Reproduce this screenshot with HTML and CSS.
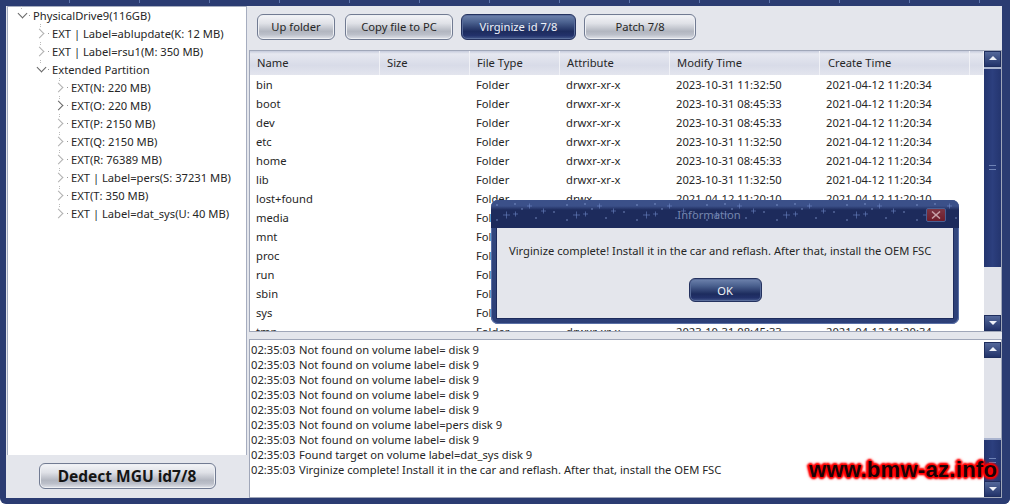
FILE: index.html
```html
<!DOCTYPE html>
<html lang="en">
<head>
<meta charset="utf-8">
<title>MGU tool</title>
<link rel="stylesheet" href="styles.css">
</head>
<body>
<div class="frame">
  <div class="left">
    <div class="tree">
      <div class="node l0"><i class="chev down"></i><span>PhysicalDrive9(116GB)</span></div>
      <div class="node l1"><i class="chev"></i><span>EXT | Label=ablupdate(K: 12 MB)</span></div>
      <div class="node l1"><i class="chev"></i><span>EXT | Label=rsu1(M: 350 MB)</span></div>
      <div class="node l1"><i class="chev down"></i><span>Extended Partition</span></div>
      <div class="node l2"><i class="chev"></i><span>EXT(N: 220 MB)</span></div>
      <div class="node l2"><i class="chev dark"></i><span>EXT(O: 220 MB)</span></div>
      <div class="node l2"><i class="chev"></i><span>EXT(P: 2150 MB)</span></div>
      <div class="node l2"><i class="chev"></i><span>EXT(Q: 2150 MB)</span></div>
      <div class="node l2"><i class="chev"></i><span>EXT(R: 76389 MB)</span></div>
      <div class="node l2"><i class="chev"></i><span>EXT | Label=pers(S: 37231 MB)</span></div>
      <div class="node l2"><i class="chev"></i><span>EXT(T: 350 MB)</span></div>
      <div class="node l2"><i class="chev"></i><span>EXT | Label=dat_sys(U: 40 MB)</span></div>
    </div>
    <div class="detect-bar"><button class="btn detect">Dedect MGU id7/8</button></div>
  </div>

  <div class="right">
    <div class="toolbar">
      <button class="btn w-up">Up folder</button>
      <button class="btn w-copy">Copy file to PC</button>
      <button class="btn dark w-virgin">Virginize id 7/8</button>
      <button class="btn w-patch">Patch 7/8</button>
    </div>

    <div class="list">
      <div class="list-main">
        <div class="row head">
          <div>Name</div><div>Size</div><div>File Type</div><div>Attribute</div><div>Modify Time</div><div>Create Time</div><div></div>
        </div>
        <div class="rows">
          <div class="row"><div>bin</div><div></div><div>Folder</div><div>drwxr-xr-x</div><div>2023-10-31 11:32:50</div><div>2021-04-12 11:20:34</div></div>
          <div class="row"><div>boot</div><div></div><div>Folder</div><div>drwxr-xr-x</div><div>2023-10-31 08:45:33</div><div>2021-04-12 11:20:34</div></div>
          <div class="row"><div>dev</div><div></div><div>Folder</div><div>drwxr-xr-x</div><div>2023-10-31 08:45:33</div><div>2021-04-12 11:20:34</div></div>
          <div class="row"><div>etc</div><div></div><div>Folder</div><div>drwxr-xr-x</div><div>2023-10-31 11:32:50</div><div>2021-04-12 11:20:34</div></div>
          <div class="row"><div>home</div><div></div><div>Folder</div><div>drwxr-xr-x</div><div>2023-10-31 08:45:33</div><div>2021-04-12 11:20:34</div></div>
          <div class="row"><div>lib</div><div></div><div>Folder</div><div>drwxr-xr-x</div><div>2023-10-31 11:32:50</div><div>2021-04-12 11:20:34</div></div>
          <div class="row"><div>lost+found</div><div></div><div>Folder</div><div>drwx------</div><div>2021-04-12 11:20:10</div><div>2021-04-12 11:20:10</div></div>
          <div class="row"><div>media</div><div></div><div>Folder</div></div>
          <div class="row"><div>mnt</div><div></div><div>Folder</div></div>
          <div class="row"><div>proc</div><div></div><div>Folder</div></div>
          <div class="row"><div>run</div><div></div><div>Folder</div></div>
          <div class="row"><div>sbin</div><div></div><div>Folder</div></div>
          <div class="row"><div>sys</div><div></div><div>Folder</div></div>
          <div class="row"><div>tmp</div><div></div><div>Folder</div><div>drwxr-xr-x</div><div>2023-10-31 08:45:33</div><div>2021-04-12 11:20:34</div></div>
        </div>
      </div>
      <div class="scroll list-scroll">
        <div class="sb-btn up"></div>
        <div class="sb-thumb t-list"><i class="grip"></i></div>
        <div class="sb-track"></div>
        <div class="sb-btn dn"></div>
      </div>
    </div>

    <div class="log">
      <div class="log-main">
        <div class="line"><span class="ts">02:35:03</span>Not found on volume label= disk 9</div>
        <div class="line"><span class="ts">02:35:03</span>Not found on volume label= disk 9</div>
        <div class="line"><span class="ts">02:35:03</span>Not found on volume label= disk 9</div>
        <div class="line"><span class="ts">02:35:03</span>Not found on volume label= disk 9</div>
        <div class="line"><span class="ts">02:35:03</span>Not found on volume label= disk 9</div>
        <div class="line"><span class="ts">02:35:03</span>Not found on volume label=pers disk 9</div>
        <div class="line"><span class="ts">02:35:03</span>Not found on volume label= disk 9</div>
        <div class="line"><span class="ts">02:35:03</span>Found target on volume label=dat_sys disk 9</div>
        <div class="line"><span class="ts">02:35:03</span>Virginize complete! Install it in the car and reflash. After that, install the OEM FSC</div>
      </div>
      <div class="scroll log-scroll">
        <div class="sb-btn up"></div>
        <div class="sb-track"></div>
        <div class="sb-thumb t-log"><i class="grip"></i></div>
        <div class="sb-btn dn"></div>
      </div>
    </div>
  </div>
</div>

<div class="dialog">
  <div class="titlebar">
    <svg class="stars" width="468" height="28" aria-hidden="true">
      <defs>
        <pattern id="st" width="70" height="28" patternUnits="userSpaceOnUse">
          <path d="M12 15h7M15.500 11.500v7M22 14h5M24.500 11.500v5M36 6h5M38.500 3.500v5M50 11h5M52.500 8.500v5" stroke="#6f8bc9" stroke-width="1" fill="none" opacity=".55"/>
          <circle cx="31" cy="9" r=".7" fill="#8aa2d8"/>
          <circle cx="45" cy="18" r=".7" fill="#8aa2d8"/>
          <circle cx="63" cy="12" r=".7" fill="#8aa2d8"/>
          <circle cx="6" cy="5" r=".7" fill="#8aa2d8"/>
          <circle cx="6" cy="20" r=".7" fill="#8aa2d8"/>
          <circle cx="24" cy="4" r=".7" fill="#8aa2d8"/>
        </pattern>
      </defs>
      <rect width="468" height="28" fill="url(#st)"/>
    </svg>
    <span class="dlg-title">Information</span>
    <span class="close"><svg width="10" height="8" viewBox="0 0 10 8" aria-hidden="true"><path d="M1 .5l8 7M9 .5l-8 7" stroke="#c9a0a8" stroke-width="1.500"/></svg></span>
  </div>
  <div class="dlg-body">
    <p class="msg">Virginize complete! Install it in the car and reflash. After that, install the OEM FSC</p>
    <button class="btn dark ok">OK</button>
  </div>
</div>

<div class="watermark">www.bmw-az.info</div>
</body>
</html>
```

FILE: styles.css
```css
* { box-sizing: border-box; }
html, body { margin: 0; padding: 0; }
body {
  width: 1012px;
  height: 504px;
  position: relative;
  overflow: hidden;
  background: #fff;
  font: 11.2px "Noto Sans", "Open Sans", sans-serif;
  color: #262626;
}

.frame {
  width: 1010px;
  height: 504px;
  display: grid;
  grid-template-columns: 240px 753px;
  column-gap: 2px;
  padding: 6px 8px 6px 7px;
  background: #e4e6ec;
  box-shadow: inset -8px 0 0 #2b3c72, inset 0 0 0 6px #2b3c72;
  border-radius: 0 0 6px 6px;
  position: relative;
}
.frame::before {
  content: "";
  position: absolute;
  left: 0;
  right: 0;
  top: 0;
  height: 3px;
  background: repeating-linear-gradient(90deg, transparent 0 69px, #5c74ad 69px 70px);
}

/* left column */
.left { display: flex; flex-direction: column; height: 492px; }
.tree {
  height: 449px;
  background: #fff;
  border: 1px solid #a6adbf;
  border-bottom: 0;
}
.node {
  height: 18px;
  display: flex;
  align-items: center;
  white-space: nowrap;
  position: relative;
  top: -1px;
}
.l0 { padding-left: 9px; }
.l1 { padding-left: 28px; }
.l2 { padding-left: 47px; }
.chev {
  width: 16px;
  height: 18px;
  flex: none;
  position: relative;
}
.chev::before {
  content: "";
  position: absolute;
  left: 0;
  top: 6px;
  width: 6px;
  height: 6px;
  border-right: 1.500px solid #b0b0b0;
  border-top: 1.500px solid #b0b0b0;
  transform: rotate(45deg);
}
.chev.dark::before { border-color: #666; }
.chev.down::before {
  left: 2px;
  top: 4px;
  border-color: #666;
  transform: rotate(135deg);
}
.chev::after {
  content: "";
  position: absolute;
  left: 12px;
  top: 9px;
  width: 1px;
  height: 1px;
  background: #999;
  box-shadow: -8px -9px 0 #bbb, -8px -7px 0 #bbb;
}
.detect-bar {
  flex: 1;
  display: flex;
  justify-content: center;
  padding-top: 8px;
}

/* buttons */
.btn {
  display: block;
  height: 26px;
  padding: 0;
  border: 1px solid #717b92;
  border-radius: 6px;
  font: 11.2px "Noto Sans", "Open Sans", sans-serif;
  color: #262626;
  background: linear-gradient(#f4f5f8 0, #dfe1e7 35%, #b2b6c0 68%, #bcc0ca 82%, #e2e4ea 100%);
  box-shadow: inset 0 0 0 1px #eef0f4;
}
.btn.dark {
  color: #eef1f8;
  border-color: #24325f;
  background: linear-gradient(#6f83ad 0, #4b618f 30%, #1d2c5e 68%, #22316a 85%, #45598c 100%);
  box-shadow: inset 0 0 0 1px #5a6d9b;
}
.detect {
  width: 177px;
  font: 700 15.500px "Noto Sans", "Open Sans", sans-serif;
  color: #151515;
}
.toolbar .btn { padding-bottom: 2px; }
.w-up { width: 78px; }
.w-copy { width: 108px; margin-left: 10px; }
.w-virgin { width: 115px; margin-left: 8px; }
.w-patch { width: 112px; margin-left: 8px; }

/* right column */
.right { display: flex; flex-direction: column; height: 492px; }
.toolbar {
  height: 44px;
  display: flex;
  padding: 8px 0 0 8px;
  flex: none;
}

.list {
  height: 282px;
  flex: none;
  display: flex;
  background: #fff;
  border: 1px solid #a0a7b9;
  overflow: hidden;
}
.list-main { width: 734px; overflow: hidden; flex: none; }
.row {
  display: grid;
  grid-template-columns: 130px 90px 90px 110px 150px 150px 14px;
  height: 19px;
  line-height: 19px;
  white-space: nowrap;
}
.row > div { padding-left: 6px; overflow: hidden; }
.row > div:last-child:empty { padding: 0; }
.row.head {
  height: 24px;
  line-height: 23px;
  background: linear-gradient(#c6cbdc 0, #e6e8f0 12%, #d8dbe8 60%, #e3e5ee 100%);
}
.row.head > div {
  padding-left: 7px;
  border-right: 1px solid #f0f1f6;
}
.row.head > div:nth-child(6) { padding-left: 8px; }

.scroll {
  width: 17px;
  flex: none;
  display: flex;
  flex-direction: column;
  background: #e1e3ea;
}
.sb-btn {
  height: 16px;
  flex: none;
  position: relative;
  background: linear-gradient(#54689a, #22336a);
  border: 1px solid #1f2e5e;
}
.sb-btn::after {
  content: "";
  position: absolute;
  left: 4px;
  width: 0;
  height: 0;
  border-left: 4px solid transparent;
  border-right: 4px solid transparent;
}
.sb-btn.up::after { top: 4px; border-bottom: 4px solid #eef1f8; }
.sb-btn.dn::after { top: 5px; border-top: 4px solid #eef1f8; }
.sb-track { flex: 1; }
.sb-thumb {
  flex: none;
  position: relative;
  background: linear-gradient(90deg, #24356f, #2c3f7e 50%, #24356f);
  border-top: 2px solid #aab4cf;
}
.t-list { height: 200px; }
.t-log { height: 43px; }
.grip {
  position: absolute;
  left: 5px;
  right: 5px;
  top: 50%;
  height: 5px;
  margin-top: -3px;
  border-top: 1px solid #6f83b5;
  border-bottom: 1px solid #6f83b5;
}
.list-scroll { height: 280px; }

.log {
  margin-top: 7px;
  flex: none;
  height: 159px;
  display: flex;
  background: #fff;
  border: 1px solid #a0a7b9;
  overflow: hidden;
}
.log-main { width: 734px; flex: none; padding: 2px 0 0 1px; }
.line { height: 15px; line-height: 15px; white-space: nowrap; }
.ts { display: inline-block; width: 48px; }
.log-scroll { margin-top: 2px; height: 155px; }

/* dialog: sits over the list */
.dialog {
  position: absolute;
  left: 491px;
  top: 200px;
  width: 468px;
  height: 124px;
  border-radius: 7px;
  background: linear-gradient(#34497f, #2c3f78);
  box-shadow: inset 0 0 0 1px #5a70a6;
  padding: 0 6px 6px;
  display: flex;
  flex-direction: column;
}
.titlebar {
  height: 28px;
  flex: none;
  position: relative;
  margin: 0 -6px;
  background: linear-gradient(#3b5089 0, #3b5089 6px, #1d2b5c 10px, #1d2b5c 100%);
  border-radius: 7px 7px 0 0;
  text-align: center;
}
.stars { position: absolute; left: 0; top: 0; }
.dlg-title {
  position: absolute;
  left: 0;
  right: 32px;
  top: 7px;
  line-height: 16px;
  color: #7586ae;
}
.close {
  position: absolute;
  left: 435px;
  top: 8px;
  width: 20px;
  height: 14px;
  display: flex;
  align-items: center;
  justify-content: center;
  background: linear-gradient(#7c3544, #6e1c2a);
  border: 1px solid #4b5f92;
  border-radius: 2px;
}
.dlg-body {
  flex: 1;
  background: #e4e6ec;
  display: flex;
  flex-direction: column;
  align-items: center;
  box-shadow: 0 0 0 1px #1d2b5c;
}
.msg {
  margin: 14px 0 0;
  width: 100%;
  padding-left: 12px;
  line-height: 18px;
  white-space: nowrap;
}
.ok { width: 73px; height: 24px; margin-top: 18px; }

/* watermark over the log */
.watermark {
  position: absolute;
  left: 809px;
  top: 458px;
  font: 700 22px/24px "Liberation Sans", Arial, sans-serif;
  letter-spacing: .3px;
  color: #1a0306;
  text-shadow: 0 0 2px #f00, 0 0 3px #f00, 0 0 4px #f00, 1px 1px 2px #f00, -1px -1px 2px #f00, 2px 0 2px #f00, -2px 0 2px #f00, 0 2px 2px #f00, 0 -2px 2px #f00;
}
```
